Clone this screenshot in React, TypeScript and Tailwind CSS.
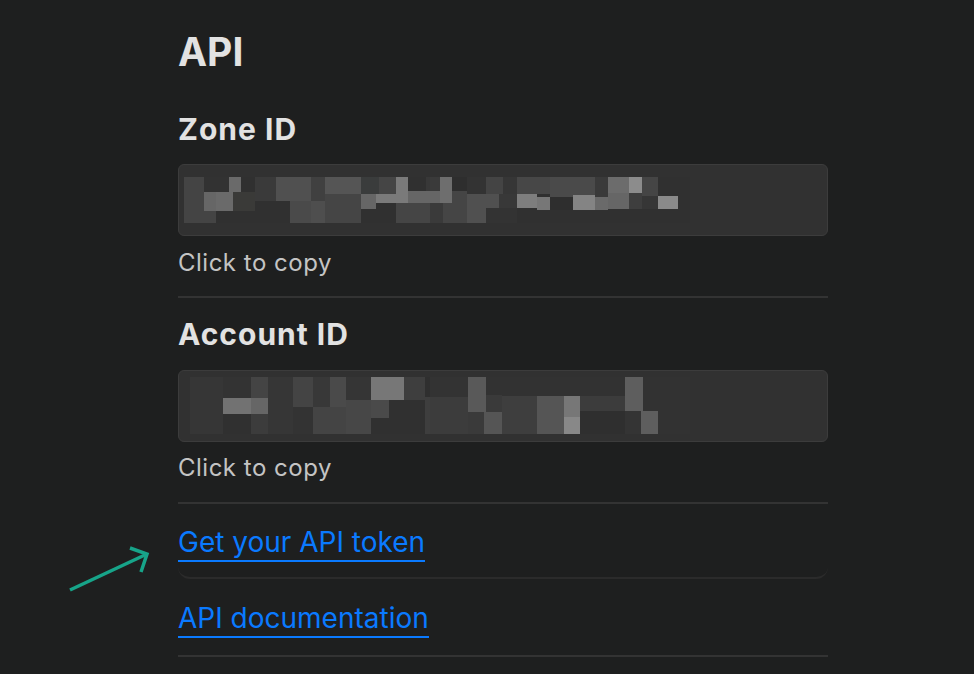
import React from 'react';

type Block = [number, number, number, number, string];

const zoneBlocks: Block[] = [
  [184, 177, 506, 46, '#303030'],
  [184, 177, 20, 46, '#444444'],
  [204, 211, 12, 12, '#444444'],
  [204, 177, 25, 15, '#323232'],
  [229, 177, 12, 15, '#6a6a6a'],
  [241, 177, 14, 15, '#303030'],
  [255, 177, 21, 24, '#3a3a3a'],
  [276, 177, 35, 24, '#505050'],
  [311, 177, 14, 24, '#404040'],
  [325, 177, 36, 17, '#555555'],
  [361, 177, 18, 17, '#3a3c3c'],
  [379, 177, 17, 17, '#454545'],
  [396, 177, 12, 26, '#7a7a7a'],
  [408, 177, 18, 14, '#303030'],
  [426, 177, 14, 14, '#383838'],
  [204, 192, 12, 19, '#666666'],
  [216, 192, 17, 19, '#6a6a6a'],
  [233, 192, 22, 19, '#3a3a38'],
  [255, 201, 35, 22, '#303030'],
  [290, 201, 21, 22, '#4a4a4a'],
  [311, 201, 14, 22, '#4e4e4e'],
  [325, 194, 36, 29, '#454545'],
  [361, 194, 15, 15, '#666666'],
  [376, 194, 32, 9, '#7a7a7a'],
  [408, 191, 22, 12, '#666666'],
  [361, 209, 35, 14, '#303030'],
  [396, 203, 34, 20, '#454545'],
  [216, 211, 39, 12, '#303030'],
  [430, 177, 10, 14, '#3a3a3a'],
  [440, 177, 12, 26, '#6e6e6e'],
  [452, 177, 15, 14, '#2e2e2e'],
  [467, 177, 19, 17, '#333333'],
  [486, 177, 17, 17, '#444444'],
  [503, 177, 14, 17, '#363636'],
  [517, 177, 33, 17, '#474747'],
  [550, 177, 45, 20, '#4a4a4a'],
  [595, 177, 13, 20, '#3a3a3a'],
  [608, 177, 21, 16, '#6c6c6c'],
  [629, 177, 13, 16, '#8c8c8c'],
  [642, 177, 16, 19, '#454545'],
  [430, 191, 10, 12, '#666666'],
  [430, 203, 13, 20, '#3a3a3a'],
  [443, 203, 24, 20, '#454545'],
  [452, 191, 15, 12, '#454545'],
  [467, 194, 32, 29, '#505050'],
  [499, 194, 18, 14, '#383838'],
  [517, 194, 20, 14, '#7e7e7e'],
  [537, 197, 13, 13, '#777777'],
  [550, 197, 23, 13, '#2e2e2e'],
  [573, 195, 22, 15, '#848484'],
  [595, 197, 13, 13, '#6a6a6a'],
  [608, 193, 21, 16, '#666666'],
  [629, 193, 13, 16, '#3e3e3e'],
  [642, 196, 16, 13, '#363636'],
  [658, 196, 20, 13, '#8a8a8a'],
  [486, 208, 31, 15, '#333333'],
];

const accountBlocks: Block[] = [
  [190, 377, 500, 57, '#323232'],
  [190, 377, 33, 57, '#363636'],
  [223, 377, 28, 21, '#333333'],
  [251, 377, 17, 21, '#444444'],
  [223, 398, 28, 16, '#727272'],
  [251, 398, 17, 16, '#666666'],
  [223, 414, 28, 20, '#303030'],
  [251, 414, 17, 20, '#3c3c3c'],
  [268, 377, 25, 57, '#363636'],
  [293, 377, 20, 30, '#444444'],
  [313, 377, 17, 30, '#383838'],
  [330, 377, 16, 30, '#4a4a4a'],
  [346, 377, 25, 23, '#353535'],
  [371, 377, 33, 23, '#777777'],
  [404, 377, 21, 23, '#3e3e3e'],
  [425, 377, 5, 20, '#2f2f2f'],
  [293, 407, 20, 27, '#333333'],
  [313, 407, 33, 27, '#444444'],
  [346, 400, 25, 34, '#474747'],
  [371, 400, 18, 18, '#4a4a4a'],
  [389, 400, 36, 34, '#303030'],
  [371, 418, 18, 16, '#303030'],
  [425, 397, 5, 37, '#3e3e3e'],
  [430, 377, 38, 20, '#333333'],
  [468, 377, 18, 35, '#595959'],
  [486, 377, 139, 19, '#323232'],
  [430, 397, 38, 37, '#3c3c3c'],
  [468, 412, 16, 22, '#3a3a3a'],
  [486, 395, 16, 17, '#3a3a3a'],
  [484, 412, 18, 22, '#555555'],
  [502, 396, 35, 38, '#3e3e3e'],
  [537, 396, 27, 38, '#555555'],
  [564, 396, 16, 21, '#777777'],
  [564, 417, 16, 17, '#888888'],
  [580, 396, 45, 15, '#3c3c3c'],
  [580, 411, 45, 23, '#2f2f2f'],
  [625, 377, 18, 34, '#5e5e5e'],
  [625, 411, 16, 23, '#343434'],
  [641, 411, 17, 23, '#5e5e5e'],
];

// redacted value field: pixelated blocks drawn in page coordinates
function RedactedField({ top, blocks }: { top: number; blocks: Block[] }) {
  return (
    <div className="h-[72px] w-full overflow-hidden rounded-md border border-[#3c3c3c] bg-[#313131]">
      <svg width="648" height="70" viewBox={`179 ${top + 1} 648 70`} className="block">
        {blocks.map(([x, y, w, h, c], i) => (
          <rect key={i} x={x} y={y} width={w} height={h} fill={c} />
        ))}
      </svg>
    </div>
  );
}

export default function App() {
  return (
    <div
      className="relative min-h-screen bg-[#1e1f1f] pl-[178px]"
      style={{ fontFamily: 'Inter, "Liberation Sans", sans-serif' }}
    >
      <div className="flex w-[650px] flex-col pt-[32px]">
        <h1 className="text-[39px] leading-[39px] font-bold text-[#e2e2e2]">API</h1>

        <h2 className="mt-[43px] text-[30px] leading-[30px] font-bold tracking-[1px] text-[#e2e2e2]">Zone ID</h2>
        <div className="mt-[20px]">
          <RedactedField top={164} blocks={zoneBlocks} />
        </div>
        <p className="mt-[15px] text-[24px] leading-[24px] tracking-[0.5px] text-[#c4c4c4]">Click to copy</p>
        <div className="mt-[21px] h-[2px] bg-[#333333]" />

        <h2 className="mt-[21px] text-[30px] leading-[30px] font-bold tracking-[1px] text-[#e2e2e2]">Account ID</h2>
        <div className="mt-[21px]">
          <RedactedField top={370} blocks={accountBlocks} />
        </div>
        <p className="mt-[14px] text-[24px] leading-[24px] tracking-[0.5px] text-[#c4c4c4]">Click to copy</p>
        <div className="mt-[22px] h-[2px] bg-[#333333]" />

        <div className="rounded-b-xl border-b-2 border-[#2b2b2b] pt-[24px] pb-[15px]">
          <a className="inline-block border-b-2 border-[#0a7aff] pb-[4px] text-[28px] leading-[28px] text-[#0a7aff]">
            Get your API token
          </a>
        </div>

        <div className="pt-[25px]">
          <a className="inline-block border-b-2 border-[#0a7aff] pb-[4px] text-[28px] leading-[28px] text-[#0a7aff]">
            API documentation
          </a>
        </div>
        <div className="mt-[17px] h-[2px] bg-[#333333]" />
      </div>

      <svg
        className="absolute left-[60px] top-[535px]"
        width="100"
        height="65"
        viewBox="60 535 100 65"
        fill="none"
        stroke="#17a489"
        strokeWidth="3.5"
      >
        <path d="M70 590 L147 554" />
        <path d="M130 548 L147 554 L141 572" strokeLinejoin="miter" />
      </svg>
    </div>
  );
}
